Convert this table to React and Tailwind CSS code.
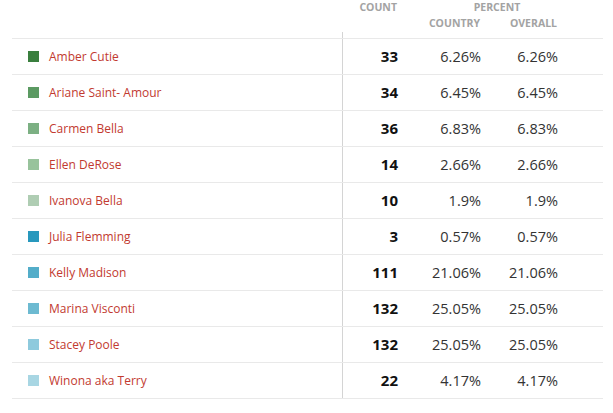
import React from 'react';

const rows = [
  { name: 'Amber Cutie', color: '#3a7f3e', count: 33, country: '6.26%', overall: '6.26%' },
  { name: 'Ariane Saint- Amour', color: '#5b9a62', count: 34, country: '6.45%', overall: '6.45%' },
  { name: 'Carmen Bella', color: '#7cb083', count: 36, country: '6.83%', overall: '6.83%' },
  { name: 'Ellen DeRose', color: '#98c39c', count: 14, country: '2.66%', overall: '2.66%' },
  { name: 'Ivanova Bella', color: '#afcdb3', count: 10, country: '1.9%', overall: '1.9%' },
  { name: 'Julia Flemming', color: '#2898bd', count: 3, country: '0.57%', overall: '0.57%' },
  { name: 'Kelly Madison', color: '#53adc9', count: 111, country: '21.06%', overall: '21.06%' },
  { name: 'Marina Visconti', color: '#6dbad1', count: 132, country: '25.05%', overall: '25.05%' },
  { name: 'Stacey Poole', color: '#8ecadd', count: 132, country: '25.05%', overall: '25.05%' },
  { name: 'Winona aka Terry', color: '#a8d6e3', count: 22, country: '4.17%', overall: '4.17%' },
];

export default function App() {
  return (
    <div className="w-[613px] h-[413px] bg-white font-['Open_Sans',sans-serif]">
      <div className="ml-[12px] w-[591px]">
        {/* Kopfzeile */}
        <div className="h-[39px] border-b border-[#e9e9e9] flex flex-col text-[10.5px] font-bold uppercase text-[#a3a3a3] leading-[14px]">
          <div className="h-[15px] flex">
            <div className="w-[330px]" />
            <div className="w-[55px] text-right">Count</div>
            <div className="w-[40px]" />
            <div className="w-[120px] text-center">Percent</div>
          </div>
          <div className="h-[15px] flex pt-[1px]">
            <div className="w-[385px]" />
            <div className="w-[83px] text-right">Country</div>
            <div className="w-[77px] text-right">Overall</div>
          </div>
          <div className="h-[2px]" />
          <div className="h-[6px] ml-[330px] border-l border-[#d4d4d4]" />
        </div>

        {rows.map((r) => (
          <div key={r.name} className="h-[36px] border-b border-[#e9e9e9] flex">
            <div className="w-[330px] flex items-center pl-[16px] gap-[10px]">
              <span className="w-[11px] h-[11px] shrink-0" style={{ backgroundColor: r.color }} />
              <span className="text-[12px] text-[#c23a30]">{r.name}</span>
            </div>
            <div className="w-[56px] border-l border-[#d4d4d4] flex items-center justify-end text-[15px] font-bold text-[#111]">
              {r.count}
            </div>
            <div className="w-[83px] flex items-center justify-end text-[14.5px] text-[#333]">{r.country}</div>
            <div className="w-[77px] flex items-center justify-end text-[14.5px] text-[#333]">{r.overall}</div>
          </div>
        ))}
      </div>
    </div>
  );
}
